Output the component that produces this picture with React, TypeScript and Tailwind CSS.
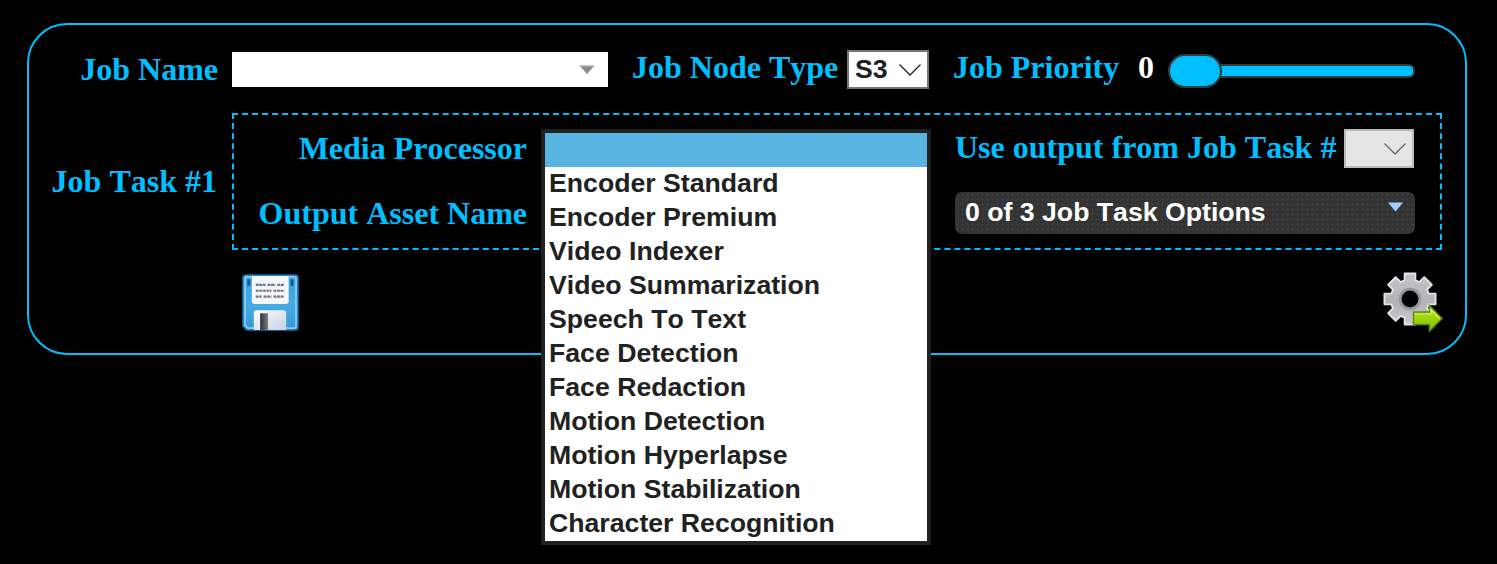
import React from "react";

const options = [
  "Encoder Standard",
  "Encoder Premium",
  "Video Indexer",
  "Video Summarization",
  "Speech To Text",
  "Face Detection",
  "Face Redaction",
  "Motion Detection",
  "Motion Hyperlapse",
  "Motion Stabilization",
  "Character Recognition",
];

function Label({ children, className = "" }: { children: React.ReactNode; className?: string }) {
  return (
    <span className={`whitespace-nowrap text-[32px] leading-[36px] font-bold text-[#00bfff] ${className}`}>{children}</span>
  );
}

function SaveIcon() {
  return (
    <svg className="blur-[0.4px]" width="57" height="57" viewBox="0 0 58 58">
      <defs>
        <linearGradient id="disk" x1="0" y1="0" x2="0" y2="1">
          <stop offset="0" stopColor="#3b9fdc" />
          <stop offset="0.55" stopColor="#46abe2" />
          <stop offset="1" stopColor="#3496d4" />
        </linearGradient>
        <linearGradient id="shutter" x1="0" y1="0" x2="1" y2="1">
          <stop offset="0" stopColor="#ffffff" />
          <stop offset="1" stopColor="#c3cfe2" />
        </linearGradient>
        <linearGradient id="slot" x1="0" y1="0" x2="1" y2="0">
          <stop offset="0" stopColor="#2c2f33" />
          <stop offset="1" stopColor="#7b7f84" />
        </linearGradient>
      </defs>
      <path d="M4 1H54Q57 1 57 4V54Q57 57 54 57H5L1 53V4Q1 1 4 1Z" fill="url(#disk)" stroke="#1b74b0" strokeWidth="1.5" />
      <path d="M4.5 3H53.5Q55 3 55 5V53Q55 55 53 55H6L3 52V5Q3 3 4.5 3Z" fill="none" stroke="#86cdf2" strokeWidth="1.8" />
      <rect x="5.5" y="5.500" width="2.800" height="6.500" fill="#0c568f" />
      <rect x="49.500" y="5.500" width="2.800" height="6.500" fill="#0c568f" />
      <path d="M10 2H47.500V27.500Q47.500 30.500 44.500 30.500H13Q10 30.500 10 27.500Z" fill="#f3f6fa" />
      <path d="M14 11H24M26 11H34M36 11H43M14 17H30M32 17H43M14 23H20M22 23H30M32 23H43" stroke="#747779" strokeWidth="2.2" strokeDasharray="3 0.6" />
      <path d="M12 57V40Q12 37 15 37H42Q45 37 45 40V57Z" fill="url(#shutter)" />
      <rect x="18.500" y="40" width="8" height="17" fill="url(#slot)" />
    </svg>
  );
}

function RunIcon() {
  const teeth = [0, 45, 90, 135, 180, 225, 270, 315];
  return (
    <svg className="blur-[0.4px]" width="62" height="62" viewBox="0 0 62 62">
      <defs>
        <linearGradient id="gear" x1="0" y1="0" x2="0" y2="1">
          <stop offset="0" stopColor="#c4c5c8" />
          <stop offset="0.5" stopColor="#b2b3b7" />
          <stop offset="1" stopColor="#d4d5d8" />
        </linearGradient>
        <linearGradient id="arrow" x1="0" y1="0" x2="0" y2="1">
          <stop offset="0" stopColor="#b9e61c" />
          <stop offset="1" stopColor="#83c200" />
        </linearGradient>
        <mask id="hole">
          <rect width="62" height="62" fill="white" />
          <circle cx="29" cy="27" r="8.5" fill="black" />
        </mask>
        <mask id="body">
          {teeth.map((a) => (
            <rect key={a} x="24.5" y="2.5" width="9" height="14" fill="white" transform={`rotate(${a} 29 27)`} />
          ))}
          <circle cx="29" cy="27" r="18.500" fill="white" />
        </mask>
      </defs>
      <g mask="url(#hole)">
        <g fill="#e3e3e5">
          {teeth.map((a) => (
            <rect key={a} x="22.700" y="0.500" width="12.600" height="14" rx="1" transform={`rotate(${a} 29 27)`} />
          ))}
          <circle cx="29" cy="27" r="20.300" />
        </g>
        <rect width="62" height="62" fill="url(#gear)" mask="url(#body)" />
        <circle cx="29" cy="27" r="10" fill="none" stroke="#98999d" strokeWidth="2.600" />
      </g>
      <path d="M32.500 40H48.500V33.500L61 46.500L48.500 59V52.500H32.500Z" fill="url(#arrow)" stroke="#5c9010" strokeWidth="1.5" />
      <path d="M34 42H50V37.500L58.500 46.500" fill="none" stroke="#d6f35c" strokeWidth="1.2" />
    </svg>
  );
}

export default function App() {
  return (
    <div className="h-[564px] w-[1497px] overflow-hidden bg-black pt-[23px] pl-[27px] font-['Liberation_Serif',serif] [font-kerning:none]">
      <div className="flex h-[332px] w-[1440px] flex-col rounded-[40px] border-2 border-[#00bfff]">
        <div className="flex h-[88px] items-start pt-[25px]">
          <Label className="mt-px w-[189px] text-right">Job Name</Label>
          <div className="mt-[2px] ml-[14px] flex h-[35px] w-[376px] items-center justify-end bg-white pr-[13px]">
            <svg width="16" height="10" viewBox="0 0 16 10">
              <path d="M0.5 0.5H15.5L8 9Z" fill="#8b8b8b" />
              <path d="M0.5 1H15.5" stroke="#c0c0c0" />
            </svg>
          </div>
          <Label className="-mt-px ml-[24px] w-[208px]">Job Node Type</Label>
          <div className="ml-[7px] flex h-[39px] w-[82px] items-center justify-between border-2 border-[#767676] bg-white pr-[6px] pl-[6px] font-['Liberation_Sans',sans-serif] text-[26.667px] font-bold text-[#212121]">
            <span className="-mt-[2px]">S3</span>
            <svg width="22" height="12" viewBox="0 0 22 12">
              <path d="M0.5 0.5L11 11L21.5 0.5" fill="none" stroke="#222" strokeWidth="1.3" />
            </svg>
          </div>
          <Label className="-mt-px ml-[24px] w-[167px]">Job Priority</Label>
          <span className="-mt-px ml-[18px] w-[16px] text-[32px] leading-[36px] font-bold text-white">0</span>
          <div className="mt-[4px] ml-[14px] flex h-[34px] w-[247px] items-center">
            <div className="z-10 h-[34px] w-[54px] shrink-0 rounded-[17px] border-2 border-[#333b3f] bg-[#00bfff]" />
            <div className="-ml-[8px] h-[14px] flex-1 rounded-r-[6px] border-2 border-[#333b3f] bg-[#00bfff]" />
          </div>
        </div>
        <div className="flex h-[137px] items-center">
          <Label className="-mt-[2px] w-[188px] text-right">Job Task #1</Label>
          <div className="ml-[15px] flex h-[137px] w-[1210px] border-2 border-dashed border-[#00bfff]">
            <div className="flex w-[293px] flex-col items-end pt-[15px]">
              <Label>Media Processor</Label>
              <Label className="mt-[29px]">Output Asset Name</Label>
            </div>
            <div className="relative w-[428px]">
              <div className="absolute top-[14px] left-[14px] z-20 h-[416px] w-[390px] border-4 border-[#212121] bg-white font-['Liberation_Sans',sans-serif] text-[26.667px] leading-[32px] font-bold text-[#212121]">
                <div className="h-[34px] bg-[#5ab4e2]" />
                {options.map((name) => (
                  <div key={name} className="h-[34px] pl-[4px] whitespace-nowrap">
                    {name}
                  </div>
                ))}
              </div>
            </div>
            <div className="w-[460px] pt-[14px]">
              <div className="flex justify-between">
                <Label>Use output from Job Task #</Label>
                <div className="mr-px flex h-[39px] w-[70px] items-center justify-end border-2 border-[#bababa] bg-[#e5e5e5] pr-[6px]">
                  <svg width="22" height="12" viewBox="0 0 22 12">
                    <path d="M0.5 0.5L11 11L21.5 0.5" fill="none" stroke="#666" strokeWidth="1.3" />
                  </svg>
                </div>
              </div>
              <div className="mt-[24px] flex h-[42px] justify-between rounded-[7px] bg-[#333] bg-[radial-gradient(circle,#424242_0.8px,transparent_1.2px)] bg-size-[5px_5px] pr-[12px] pl-[10px] font-['Liberation_Sans',sans-serif] text-[26.667px] leading-[40px] font-bold text-white">
                <span>0 of 3 Job Task Options</span>
                <svg className="mt-[10px]" width="15" height="10" viewBox="0 0 15 10">
                  <path d="M0 0.5H15L7.5 9.5Z" fill="#a0cffa" />
                </svg>
              </div>
            </div>
          </div>
        </div>
        <div className="flex justify-between pt-[22px] pr-[22px] pl-[213px]">
          <div className="pt-[2px]">
            <SaveIcon />
          </div>
          <RunIcon />
        </div>
      </div>
    </div>
  );
}
